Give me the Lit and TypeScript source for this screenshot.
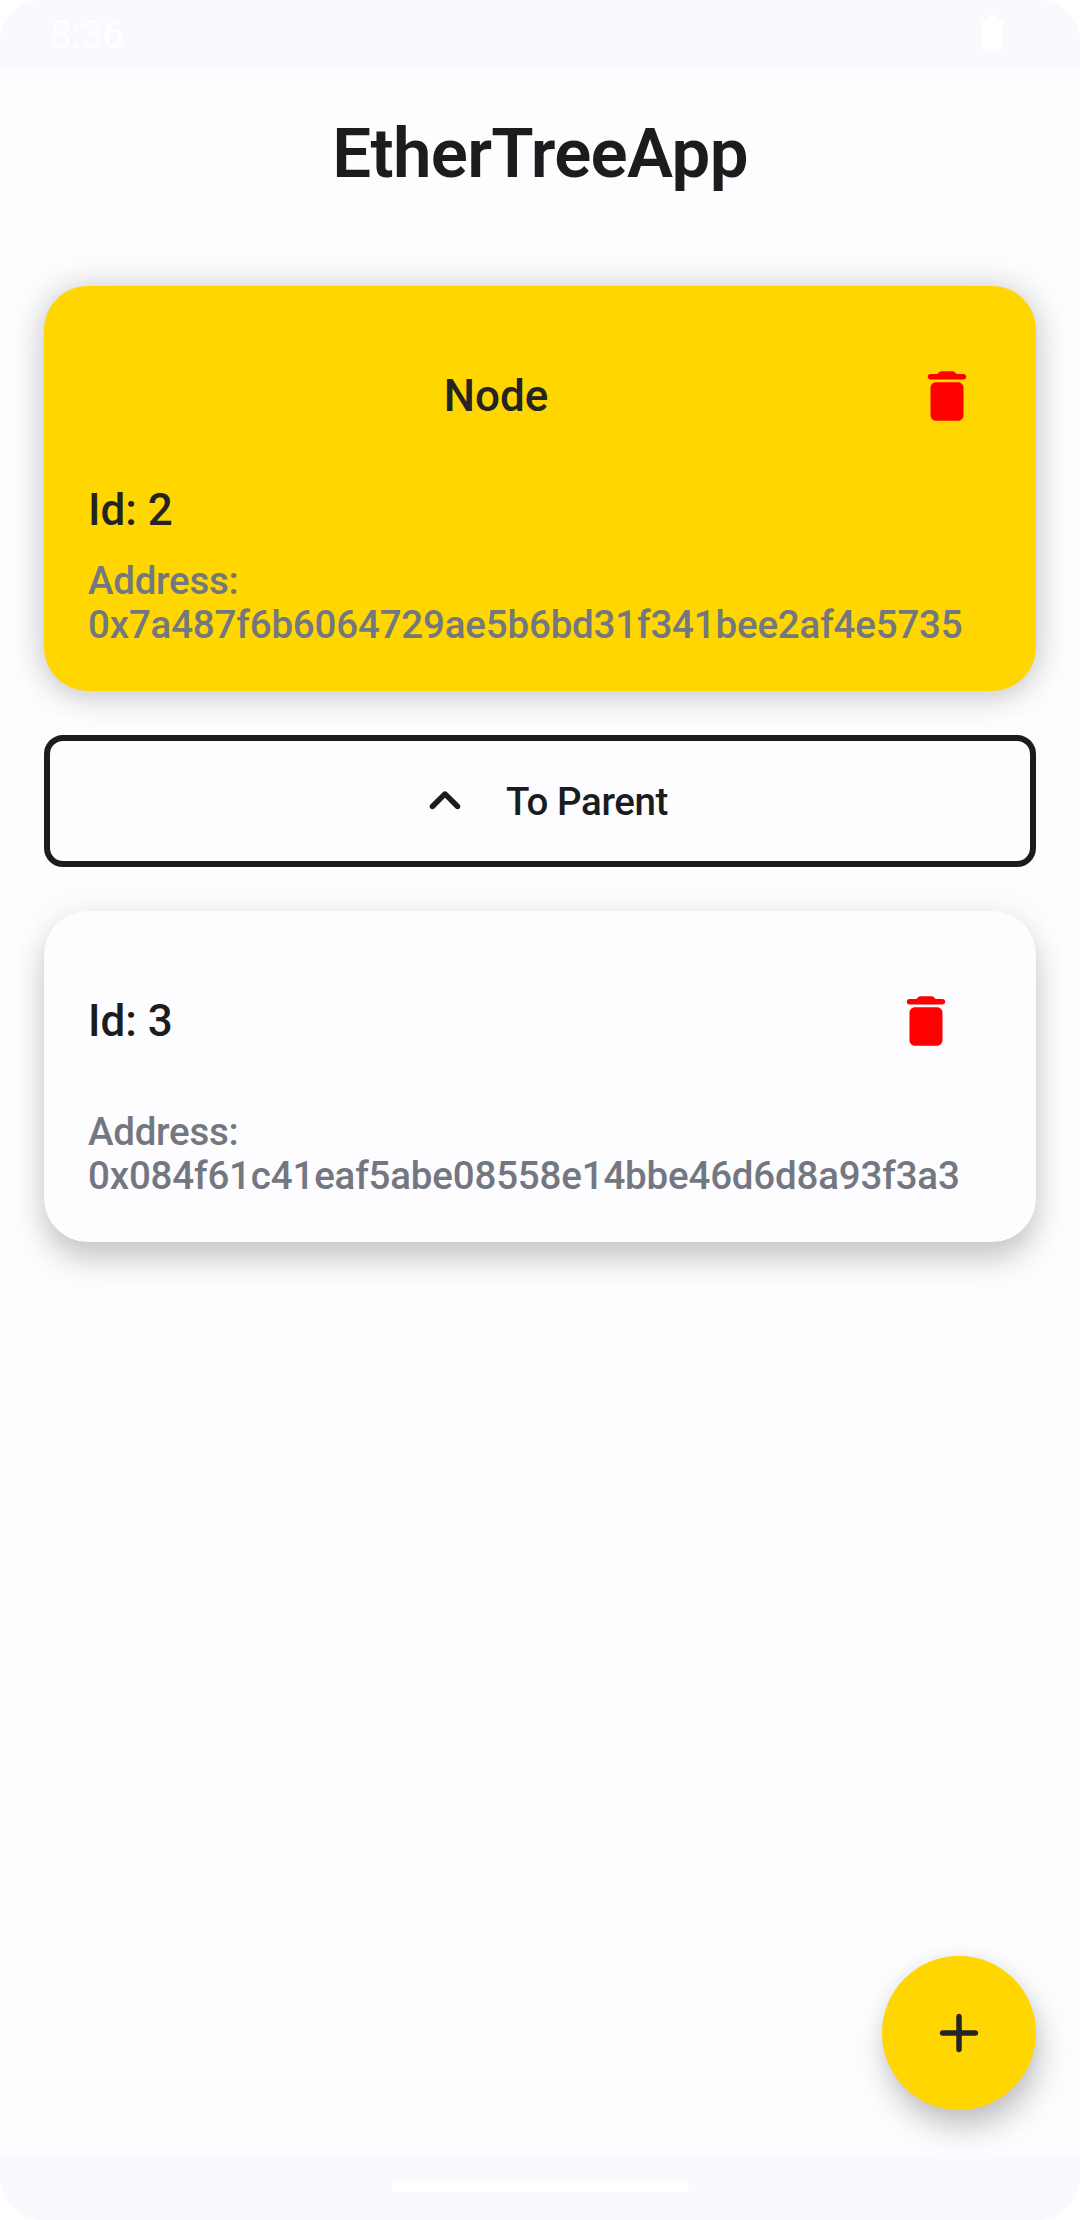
import { LitElement, html, css, svg } from "lit";
import { customElement, property } from "lit/decorators.js";

const icons = {
  trash: svg`<path d="M6,19c0,1.1 0.9,2 2,2h8c1.1,0 2,-0.9 2,-2V9c0,-1.1 -0.9,-2 -2,-2H8C6.9,7 6,7.9 6,9v10zM18,4h-2.5l-0.71,-0.71c-0.18,-0.18 -0.44,-0.29 -0.7,-0.29H9.91c-0.26,0 -0.52,0.11 -0.7,0.29L8.5,4H6c-0.55,0 -1,0.45 -1,1s0.45,1 1,1h12c0.55,0 1,-0.45 1,-1s-0.45,-1 -1,-1z"/>`,
  up: svg`<path d="M8.12,14.71L12,10.83l3.88,3.88c0.39,0.39 1.02,0.39 1.41,0 0.39,-0.39 0.39,-1.02 0,-1.41L12.7,8.71c-0.39,-0.39 -1.02,-0.39 -1.41,0L6.7,13.3c-0.39,0.39 -0.39,1.02 0,1.41 0.39,0.38 1.03,0.39 1.42,0z"/>`,
  add: svg`<path d="M18,13h-5v5c0,0.55 -0.45,1 -1,1s-1,-0.45 -1,-1v-5H6c-0.55,0 -1,-0.45 -1,-1s0.45,-1 1,-1h5V6c0,-0.55 0.45,-1 1,-1s1,0.45 1,1v5h5c0.55,0 1,0.45 1,1s-0.45,1 -1,1z"/>`,
};

@customElement("app-icon")
export class AppIcon extends LitElement {
  @property() name: keyof typeof icons = "add";

  static styles = css`
    :host {
      display: block;
      flex: none;
      width: 66px;
      height: 66px;
    }
    .glyph {
      display: block;
      width: 100%;
      height: 100%;
      fill: currentColor;
    }
  `;

  render() {
    return html`<svg class="glyph" viewBox="0 0 24 24">${icons[this.name]}</svg>`;
  }
}

@customElement("node-card")
export class NodeCard extends LitElement {
  @property() nodeId = "";
  @property() address = "";
  @property({ type: Boolean, reflect: true }) current = false;

  static styles = css`
    :host {
      display: block;
      box-sizing: border-box;
      padding: 44px;
      border-radius: 44px;
      color: #1a1c1e;
      background: #fdfcff;
      box-shadow: 0 0 36px rgba(0, 0, 0, 0.06), 0 18px 30px rgba(0, 0, 0, 0.19);
    }
    :host([current]) {
      color: #242424;
      background: #ffd600;
      box-shadow: 0 0 36px rgba(0, 0, 0, 0.12), 0 6px 30px rgba(0, 0, 0, 0.14);
    }
    .head {
      display: flex;
      align-items: center;
      height: 132px;
      margin-bottom: 23px;
    }
    :host([current]) .head {
      margin-bottom: 22px;
    }
    .label {
      font-size: 44px;
      line-height: 52px;
    }
    .head .label {
      flex: 1;
    }
    :host([current]) .head .label {
      text-align: center;
    }
    .bin {
      color: #ff0000;
      margin-right: 33px;
    }
    :host([current]) .bin {
      margin: 0 12px 0 10px;
    }
    .id {
      margin-bottom: 23px;
    }
    .address {
      color: #73777f;
      font-size: 38.5px;
      line-height: 44px;
      letter-spacing: -0.28px;
      white-space: nowrap;
    }
    .hash {
      letter-spacing: -0.18px;
    }
  `;

  render() {
    const id = `Id: ${this.nodeId}`;
    return html`
      <div class="head">
        <div class="label">${this.current ? "Node" : id}</div>
        <app-icon class="bin" name="trash"></app-icon>
      </div>
      ${this.current ? html`<div class="label id">${id}</div>` : null}
      <div class="address">Address:<br /><span class="hash">${this.address}</span></div>
    `;
  }
}

@customElement("app-root")
export class AppRoot extends LitElement {
  static styles = css`
    :host {
      display: block;
      background: #ffffff;
      font-family: Roboto, sans-serif;
      font-weight: 500;
    }
    .screen {
      display: flex;
      flex-direction: column;
      width: 1080px;
      height: 2220px;
      border-radius: 42px;
      overflow: hidden;
      background: #fdfcff;
    }
    .status {
      display: flex;
      flex: none;
      justify-content: space-between;
      box-sizing: border-box;
      height: 66px;
      padding: 12px 77px 0 50px;
      background: #faf9fe;
      color: #ffffff;
    }
    .clock {
      font-size: 38.5px;
      font-weight: 400;
      line-height: 46px;
    }
    .battery {
      display: block;
      width: 21px;
      height: 36px;
      margin-top: 3px;
      fill: #ffffff;
    }
    .page {
      position: relative;
      flex: 1;
      overflow: hidden;
      padding: 44px 44px 0;
    }
    .title {
      margin: 0 0 88px;
      font-size: 69px;
      font-weight: 600;
      line-height: 88px;
      letter-spacing: -0.7px;
      text-align: center;
      color: #1a1c1e;
    }
    .stack {
      display: flex;
      flex-direction: column;
      gap: 44px;
    }
    .parent {
      display: flex;
      align-items: center;
      justify-content: center;
      gap: 28px;
      box-sizing: border-box;
      height: 132px;
      padding: 0;
      border: 6px solid #1a1c1e;
      border-radius: 19px;
      background: #fdfcff;
      color: #1a1c1e;
      font: inherit;
      font-size: 38.5px;
      line-height: 44px;
      letter-spacing: -0.4px;
    }
    .parent-label {
      padding-top: 2px;
    }
    .fab {
      position: absolute;
      right: 44px;
      bottom: 44px;
      display: grid;
      place-items: center;
      width: 154px;
      height: 154px;
      padding: 0;
      border: 0;
      border-radius: 50%;
      background: #ffd600;
      color: #242424;
      box-shadow: 0 0 18px rgba(0, 0, 0, 0.05), 4px 18px 30px rgba(0, 0, 0, 0.22);
    }
    .nav {
      display: grid;
      flex: none;
      justify-content: center;
      height: 66px;
      background: #faf9fe;
    }
    .pill {
      width: 297px;
      height: 11px;
      margin-top: 27px;
      border-radius: 5px;
      background: #ffffff;
    }
  `;

  render() {
    return html`
      <div class="screen">
        <div class="status">
          <div class="clock">8:36</div>
          <svg class="battery" viewBox="0 0 21 36">
            <path d="M6 4V1.5Q6 0 7.5 0H13.5Q15 0 15 1.5V4H18Q21 4 21 7V33Q21 36 18 36H3Q0 36 0 33V7Q0 4 3 4Z" />
          </svg>
        </div>
        <div class="page">
          <h1 class="title">EtherTreeApp</h1>
          <div class="stack">
            <node-card current nodeId="2" address="0x7a487f6b6064729ae5b6bd31f341bee2af4e5735"></node-card>
            <button class="parent"><app-icon name="up"></app-icon><span class="parent-label">To Parent</span></button>
            <node-card nodeId="3" address="0x084f61c41eaf5abe08558e14bbe46d6d8a93f3a3"></node-card>
          </div>
          <button class="fab"><app-icon name="add"></app-icon></button>
        </div>
        <div class="nav"><div class="pill"></div></div>
      </div>
    `;
  }
}
